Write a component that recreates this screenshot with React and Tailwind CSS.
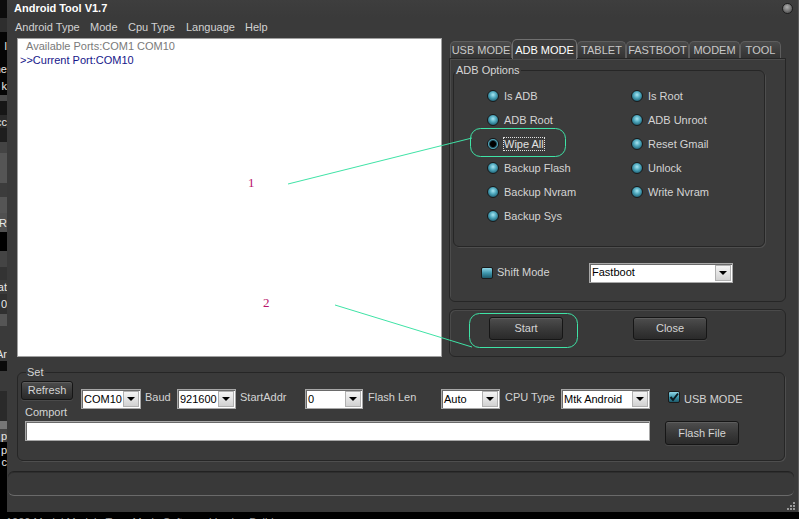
import React from "react";

function Combo({ w, text }) {
  return (
    <div
      className="h-[20px] bg-white border border-[#a8a8a8] shadow-[inset_1px_1px_0_#6a6a6a] flex items-center shrink-0"
      style={{ width: w }}
    >
      <span className="flex-1 pl-[2px] text-[11px] leading-[13px] text-black whitespace-nowrap overflow-hidden">{text}</span>
      <div className="w-[16px] h-[16px] mr-[1px] bg-gradient-to-b from-[#f4f4f4] to-[#d2d2d2] border border-[#b0b0b0] flex items-center justify-center">
        <div className="w-0 h-0 border-l-[4px] border-r-[4px] border-t-[4px] border-l-transparent border-r-transparent border-t-black" />
      </div>
    </div>
  );
}

function DarkButton({ w, h, children, cls }) {
  return (
    <div
      className={`rounded-[3px] border border-[#161616] bg-gradient-to-b from-[#4e4e4e] via-[#3a3a3a] to-[#2a2a2a] shadow-[inset_0_1px_0_#5e5e5e,0_1px_0_#4a4a4a] flex items-center justify-center text-[11px] text-[#d4d4d4] shrink-0 ${cls || ""}`}
      style={{ width: w, height: h }}
    >
      {children}
    </div>
  );
}

function Radio({ label, selected, focused }) {
  return (
    <div className="flex items-center h-[24px]">
      {selected ? (
        <div className="w-[12px] h-[12px] rounded-full border border-[#151515] shrink-0 bg-[radial-gradient(circle,#000000_0%,#000000_36%,#1d4752_50%,#5cb8cf_66%,#1d5868_100%)]" />
      ) : (
        <div className="w-[12px] h-[12px] rounded-full border border-[#1a1a1a] shrink-0 bg-[radial-gradient(circle_at_50%_38%,#a8e6f2_0%,#4fa8bd_40%,#1f6276_80%,#153f4b_100%)]" />
      )}
      <span
        className={
          focused
            ? "ml-[5px] text-[11px] leading-[12px] text-[#e2e2e2] outline-1 outline-dotted outline-[#e0e0e0]"
            : "ml-[5px] text-[11px] leading-[12px] text-[#d4d4d4]"
        }
      >
        {label}
      </span>
    </div>
  );
}

function Tab({ label, w, selected }) {
  if (selected) {
    return (
      <div
        className="h-[20px] -mb-[1px] z-10 rounded-t-[5px] border border-b-0 border-[#707070] bg-[#3b3b3b] flex items-start justify-center pt-[2px] text-[11px] text-white"
        style={{ width: w }}
      >
        {label}
      </div>
    );
  }
  return (
    <div
      className="h-[17px] rounded-t-[5px] border border-b-0 border-[#5e5e5e] bg-gradient-to-b from-[#4a4a4a] to-[#333333] flex items-center justify-center pt-[1px] text-[11px] text-[#c8c8c8]"
      style={{ width: w }}
    >
      {label}
    </div>
  );
}

function LeftStrip() {
  const blocks = [
    { h: 18, c: "#0c0c0c" },
    { h: 14, c: "#2e2e2e" },
    { h: 28, c: "#050505", t: "l" },
    { h: 17, c: "#050505", t: "ne" },
    { h: 18, c: "#050505", t: "k" },
    { h: 6, c: "#4a4a4a" },
    { h: 14, c: "#161616" },
    { h: 13, c: "#2a2a2a", t: "cc" },
    { h: 14, c: "#1e1e1e" },
    { h: 11, c: "#444444" },
    { h: 30, c: "#555555" },
    { h: 14, c: "#3c3c3c" },
    { h: 16, c: "#555555" },
    { h: 19, c: "#505050", t: "R" },
    { h: 19, c: "#000000" },
    { h: 16, c: "#444444" },
    { h: 13, c: "#333333" },
    { h: 14, c: "#3a3a3a", t: "at" },
    { h: 20, c: "#303030", t: "0" },
    { h: 12, c: "#555555" },
    { h: 20, c: "#3a3a3a" },
    { h: 15, c: "#3a3a3a", t: "Ar" },
    { h: 10, c: "#0a0a0a" },
    { h: 20, c: "#3a3a3a" },
    { h: 30, c: "#2a2a2a" },
    { h: 8, c: "#777777" },
    { h: 13, c: "#444444", t: "p" },
    { h: 15, c: "#000000", t: "p" },
    { h: 10, c: "#000000", t: "c" },
  ];
  return (
    <div className="w-[7px] h-full overflow-hidden flex flex-col bg-black">
      {blocks.map((b, i) => (
        <div
          key={i}
          className="shrink-0 overflow-hidden text-[11px] leading-[12px] text-[#e8e8e8] whitespace-nowrap flex items-center justify-end"
          style={{ height: b.h, background: b.c }}
        >
          {b.t || ""}
        </div>
      ))}
    </div>
  );
}

export default function App() {
  const radios = [
    ["Is ADB"],
    ["Is Root"],
    ["ADB Root"],
    ["ADB Unroot"],
    ["Wipe All", true, true],
    ["Reset Gmail"],
    ["Backup Flash"],
    ["Unlock"],
    ["Backup Nvram"],
    ["Write Nvram"],
    ["Backup Sys"],
  ];
  return (
    <div className="w-[799px] h-[519px] bg-black relative overflow-hidden font-['Liberation_Sans',Arial,sans-serif]">
      <div className="flex h-[512px]">
        <LeftStrip />
        <div className="w-[792px] h-full flex flex-col bg-[#3a3a3a] border-r border-[#5c5c5c]">
          {/* title bar */}
          <div className="h-[17px] flex items-center bg-gradient-to-b from-[#3e3e3e] to-[#3a3a3a]">
            <span className="pl-[7px] text-[11px] font-bold text-white leading-[13px]">Android Tool V1.7</span>
            <div className="ml-auto mr-[5px] w-[11px] h-[11px] rounded-full border border-[#1e1e1e] bg-[radial-gradient(circle_at_45%_35%,#b0b0b0,#6a6a6a_60%,#444444)]" />
          </div>
          {/* menu bar */}
          <div className="h-[21px] flex items-center pl-[8px] text-[11px] text-[#d2d2d2]">
            <span className="w-[75px]">Android Type</span>
            <span className="w-[38px]">Mode</span>
            <span className="w-[58px]">Cpu Type</span>
            <span className="w-[59px]">Language</span>
            <span>Help</span>
          </div>
          {/* main row */}
          <div className="h-[319px] flex pl-[10px]">
            <div className="w-[425px] h-full bg-white border border-[#a0a0a0] text-[11px] leading-[14px]">
              <div className="pl-[8px] text-[#7a7a7a]">Available Ports:COM1 COM10</div>
              <div className="pl-[2px] text-[#16168a]">&gt;&gt;Current Port:COM10</div>
            </div>
            <div className="ml-[7px] w-[337px] flex flex-col">
              <div className="mt-[1px] h-[19px] flex items-end pl-[1px]">
                <Tab label="USB MODE" w={62} />
                <Tab label="ADB MODE" w={65} selected />
                <Tab label="TABLET" w={49} />
                <Tab label="FASTBOOT" w={63} />
                <Tab label="MODEM" w={51} />
                <Tab label="TOOL" w={41} />
              </div>
              <div className="h-[244px] border border-[#262626] rounded-b-[6px] bg-[#3b3b3b] shadow-[inset_1px_1px_0_#4c4c4c] flex flex-col">
                <fieldset className="mt-[5px] ml-[3px] w-[312px] min-w-0 h-[183px] border border-[#262626] rounded-[6px] shadow-[1px_1px_0_#4e4e4e]">
                  <legend className="ml-[1px] px-[1px] text-[11px] leading-[13px] text-[#d6d6d6]">ADB Options</legend>
                  <div className="pt-[7px] ml-[33px] grid grid-cols-[144px_120px]">
                    {radios.map(([l, s, f]) => (
                      <Radio key={l} label={l} selected={s} focused={f} />
                    ))}
                  </div>
                </fieldset>
                <div className="mt-[15px] h-[21px] flex items-center">
                  <div className="ml-[31px] w-[12px] h-[12px] rounded-[2px] border border-[#1a1a1a] bg-gradient-to-b from-[#8fd6e6] via-[#3f97ad] to-[#1d5a6b] shrink-0" />
                  <span className="ml-[4px] w-[92px] text-[11px] text-[#d4d4d4]">Shift Mode</span>
                  <Combo w={144} text="Fastboot" />
                </div>
              </div>
              <div className="mt-[7px] h-[48px] border border-[#262626] rounded-[6px] bg-[#393939] shadow-[inset_1px_1px_0_#4a4a4a] flex items-start pt-[7px]">
                <DarkButton w={74} h={23} cls="ml-[39px]">Start</DarkButton>
                <DarkButton w={74} h={23} cls="ml-[70px]">Close</DarkButton>
              </div>
            </div>
          </div>
          {/* Set group */}
          <fieldset className="mt-[9px] ml-[10px] w-[768px] min-w-0 h-[95px] border border-[#262626] rounded-[6px] shadow-[1px_1px_0_#4e4e4e]">
            <legend className="ml-[8px] px-[1px] text-[11px] leading-[13px] text-[#d4d4d4]">Set</legend>
            <div className="pt-[2px] flex items-start h-[30px]">
              <DarkButton w={52} h={19} cls="ml-[3px]">Refresh</DarkButton>
              <div className="ml-[8px] mt-[8px]"><Combo w={60} text="COM10" /></div>
              <span className="ml-[4px] w-[32px] mt-[8px] text-[11px] text-[#d4d4d4]">Baud</span>
              <div className="mt-[8px]"><Combo w={59} text="921600" /></div>
              <span className="ml-[4px] w-[65px] mt-[8px] text-[11px] text-[#d4d4d4]">StartAddr</span>
              <div className="mt-[8px]"><Combo w={58} text="0" /></div>
              <span className="ml-[5px] w-[73px] mt-[8px] text-[11px] text-[#d4d4d4]">Flash Len</span>
              <div className="mt-[8px]"><Combo w={59} text="Auto" /></div>
              <span className="ml-[5px] w-[56px] mt-[8px] text-[11px] text-[#d4d4d4]">CPU Type</span>
              <div className="mt-[8px]"><Combo w={89} text="Mtk Android" /></div>
              <div className="ml-[18px] mt-[10px] w-[12px] h-[12px] rounded-[2px] border border-[#1a1a1a] bg-gradient-to-b from-[#8fd6e6] via-[#3f97ad] to-[#1d5a6b] flex items-center justify-center shrink-0">
                <svg width="10" height="10" viewBox="0 0 10 10">
                  <path d="M1.5 5 L4 8 L9 1.5" stroke="#0c1a20" strokeWidth="2" fill="none" />
                </svg>
              </div>
              <span className="ml-[4px] mt-[10px] text-[11px] text-[#d4d4d4]">USB MODE</span>
            </div>
            <div className="-mt-[3px] ml-[7px] h-[13px] text-[11px] leading-[13px] text-[#d4d4d4]">Comport</div>
            <div className="mt-[2px] flex items-start">
              <div className="ml-[7px] w-[625px] h-[20px] bg-white border border-[#a8a8a8] shadow-[inset_1px_1px_0_#6a6a6a]" />
              <DarkButton w={74} h={24} cls="ml-[15px]">Flash File</DarkButton>
            </div>
          </fieldset>
          {/* status bar */}
          <div className="mt-[10px] ml-[1px] w-[786px] h-[25px] rounded-[6px] border-t border-[#222222] border-b border-b-[#6a6a6a] bg-[#393939] shadow-[inset_0_1px_0_#2e2e2e]" />
          <div className="flex-1 flex justify-end items-end pr-[3px] pb-[2px]">
            <div className="grid grid-cols-3 gap-[1px]">
              <div className="w-[2px] h-[2px]" />
              <div className="w-[2px] h-[2px]" />
              <div className="w-[2px] h-[2px] bg-[#9a9a9a]" />
              <div className="w-[2px] h-[2px]" />
              <div className="w-[2px] h-[2px] bg-[#9a9a9a]" />
              <div className="w-[2px] h-[2px] bg-[#9a9a9a]" />
              <div className="w-[2px] h-[2px] bg-[#9a9a9a]" />
              <div className="w-[2px] h-[2px] bg-[#9a9a9a]" />
              <div className="w-[2px] h-[2px] bg-[#9a9a9a]" />
            </div>
          </div>
        </div>
      </div>
      {/* bottom strip behind window */}
      <div className="h-[7px] overflow-hidden bg-black">
        <div className="pt-[4px] pl-[6px] text-[11px] leading-[13px] text-[#9a9a9a] whitespace-nowrap">
          1000 Model Modelo Type    Mode Software Version   Build
        </div>
      </div>
      {/* annotations overlay */}
      <svg className="absolute inset-0 pointer-events-none" width="799" height="519">
        <line x1="288" y1="184" x2="472" y2="138" stroke="#3fe3a6" strokeWidth="1" />
        <line x1="335" y1="305" x2="472" y2="347" stroke="#3fe3a6" strokeWidth="1" />
        <rect x="470.5" y="128.5" width="95" height="28" rx="10" fill="none" stroke="#3fe3a6" strokeWidth="1" />
        <rect x="469.5" y="313.5" width="108" height="34" rx="10" fill="none" stroke="#3fe3a6" strokeWidth="1" />
      </svg>
      <span className="absolute left-[248px] top-[176px] text-[13px] leading-[14px] text-[#b8146a] font-['Liberation_Serif',serif]">1</span>
      <span className="absolute left-[263px] top-[296px] text-[13px] leading-[14px] text-[#b8146a] font-['Liberation_Serif',serif]">2</span>
    </div>
  );
}
